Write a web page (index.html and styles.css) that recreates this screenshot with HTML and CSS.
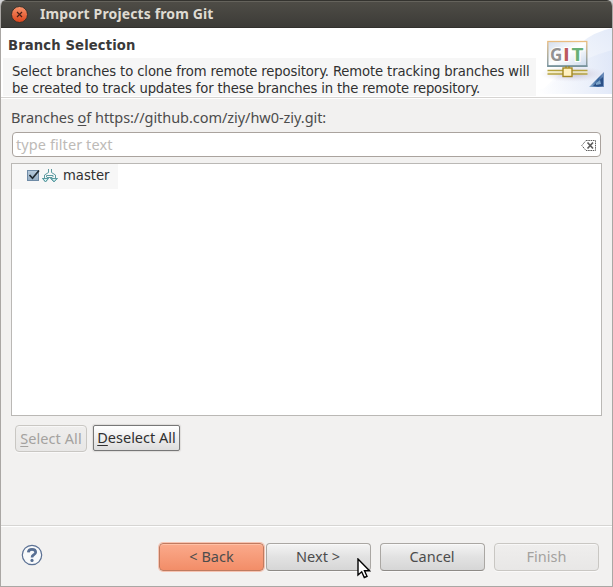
FILE: index.html
```html
<!DOCTYPE html>
<html lang="en">
<head>
<meta charset="utf-8">
<title>Import Projects from Git</title>
<link rel="stylesheet" href="styles.css">
</head>
<body>
<div class="window">
  <header class="titlebar">
    <svg class="close" width="18" height="18" viewBox="0 0 18 18">
      <defs><linearGradient id="cl" x1="0" y1="0" x2="0" y2="1"><stop offset="0" stop-color="#f8946c"/><stop offset="1" stop-color="#dc431a"/></linearGradient></defs>
      <circle cx="9.500" cy="9.500" r="8" fill="url(#cl)" stroke="#35322c"/>
      <path d="M7 7l5 5m0-5l-5 5" stroke="#492016" stroke-width="1.2"/>
    </svg>
    <span class="title">Import Projects from Git</span>
  </header>
  <section class="banner">
    <div class="intro">
      <h1>Branch Selection</h1>
      <p><span class="l1">Select branches to clone from remote repository. Remote tracking branches will</span><br><span class="l2">be created to track updates for these branches in the remote repository.</span></p>
    </div>
    <svg class="art" width="75" height="66" viewBox="0 0 75 66">
      <defs>
        <linearGradient id="sky" x1="0" y1="1" x2="1" y2="0"><stop offset="0" stop-color="#fff"/><stop offset=".5" stop-color="#f3f6fc"/><stop offset="1" stop-color="#e4ebf9"/></linearGradient>
        <linearGradient id="sky2" x1="0" y1="0" x2="1" y2="0"><stop offset="0" stop-color="#fff"/><stop offset="1" stop-color="#dbe4f7"/></linearGradient>
        <linearGradient id="screen" x1="0" y1="0" x2="1" y2="1"><stop offset="0" stop-color="#d3deee"/><stop offset=".5" stop-color="#fff"/><stop offset="1" stop-color="#cbd9ec"/></linearGradient>
        <linearGradient id="edge" x1="0" y1="0" x2="0" y2="1"><stop offset="0" stop-color="#e9bd80"/><stop offset="1" stop-color="#718c98"/></linearGradient>
        <linearGradient id="tri" x1="0" y1="0" x2="1" y2="0"><stop offset="0" stop-color="#9ab9d7"/><stop offset=".6" stop-color="#35639c"/><stop offset="1" stop-color="#7391bd"/></linearGradient>
        <radialGradient id="shade"><stop offset="0" stop-color="#bab2c4" stop-opacity=".8"/><stop offset="1" stop-color="#d8d4e2" stop-opacity="0"/></radialGradient>
      </defs>
      <path d="M75 0V66H0V62Q16 60 23 45Q38 8 75 0z" fill="url(#sky)"/>
      <path d="M75 22V66H2Q28 35 75 22z" fill="url(#sky2)" opacity=".7"/>
      <ellipse cx="36" cy="46" rx="33" ry="8" fill="url(#shade)"/>
      <rect x="10.800" y="13.500" width="39" height="24.500" fill="url(#screen)" stroke="url(#edge)" stroke-width="1.300"/>
      <path d="M10.200 38.300h40.300" stroke="#78939c" stroke-width="1.500"/>
      <g font-family="Noto Sans, sans-serif" font-weight="700" font-size="17" stroke="#fff" stroke-width="2" paint-order="stroke">
        <text x="13" y="32.500" fill="#929292">G</text><text x="26.300" y="32.500" font-family="DejaVu Sans, sans-serif" fill="#bc5a5e">I</text><text x="34.500" y="32.500" textLength="12" lengthAdjust="spacingAndGlyphs" fill="#68b077">T</text>
      </g>
      <path d="M10.500 42.500h40M10.500 46h40" stroke="#b6a23b" stroke-width="1.600"/>
      <path d="M10.500 44.200h40" stroke="#f8edac"/>
      <path d="M29 38v3M32 38v3" stroke="#9a872c" stroke-width="1.300"/>
      <rect x="26" y="40" width="9" height="8.500" fill="#fff1c0" stroke="#a58923" stroke-width="1.400"/>
      <path d="M67 44V59H52z" fill="url(#tri)"/><path d="M66 49V58H56z" fill="#2a4f86"/><path d="M59 55l4-3 1 4-5 1z" fill="#7ea5ca"/>
    </svg>
  </section>
  <main class="content">
    <div class="caption"><span>Branches <u>o</u>f https://github.com/ziy/hw0-ziy.git:</span></div>
    <div class="filter">
      <span>type filter text</span>
      <svg width="15" height="11" viewBox="0 0 15 11"><path d="M5 .5H14.500V10.500H5L.8 5.500z" fill="#fff" stroke="#5e5e5e" stroke-dasharray="1.600 .7"/><path d="M6.500 2.500l5.500 6m0-6l-5.500 6" stroke="#5c5c5c" stroke-width="1.700"/></svg>
    </div>
    <div class="tree">
      <div class="row">
        <svg class="check" width="14" height="13" viewBox="0 0 14 13"><defs><linearGradient id="cb" x1="0" y1="0" x2="0" y2="1"><stop offset="0" stop-color="#b7cbdc"/><stop offset="1" stop-color="#96aec4"/></linearGradient></defs><rect x=".5" y="1.500" width="11" height="10" fill="url(#cb)" stroke="#6f8ba6"/><path d="M2.500 6l3 3.300L12 1.500" fill="none" stroke="#202a32" stroke-width="1.700"/></svg>
        <svg class="branch" width="16" height="14" viewBox="0 0 16 14"><g fill="#d5f4f4" stroke="#5b9aa0"><path d="M6.500 0v3.500L2.500 6v3.500H.5L3.500 13 6.500 9.500H5V8.500H10V9.500H8.500L12 13 15.500 9.500H13.500V6L9.500 3.500V0" fill="none"/><path d="M.7 9.500h5.600L3.500 12.700zM9.300 9.500h5.600L12.100 12.700z"/><path d="M4.500 8V6.500h6.500V8" fill="none"/></g></svg>
        <span>master</span>
      </div>
    </div>
    <div class="selectors">
      <div class="btn select disabled"><span><u>S</u>elect All</span></div>
      <div class="btn deselect"><span><u>D</u>eselect All</span></div>
    </div>
  </main>
  <footer class="footer">
    <svg class="help" width="22" height="22" viewBox="0 0 22 22"><circle cx="11" cy="11" r="9.700" fill="#f8f9fa" stroke="#5b7194" stroke-width="1.200"/><path d="M7.300 8.300Q7.500 5.300 11 5.300Q14.700 5.300 14.700 8.200Q14.700 9.800 12.500 11Q11 11.800 11 13.500" fill="none" stroke="#586f93" stroke-width="2.700"/><circle cx="11" cy="16.400" r="1.600" fill="#586f93"/></svg>
    <div class="btn back"><span>&lt; Back</span></div>
    <div class="btn next"><span>Next &gt;</span></div>
    <div class="btn cancel"><span>Cancel</span></div>
    <div class="btn finish disabled"><span>Finish</span></div>
  </footer>
  <svg class="cursor" width="14" height="21" viewBox="0 0 14 21"><path d="M1 1V17L4.700 13.800L7.300 19.500L10 18.300L7.500 12.700H12.500z" fill="#fff" stroke="#000" stroke-width="1.400"/></svg>
</div>
</body>
</html>
```
FILE: styles.css
```css
* { box-sizing: border-box; }
body { margin: 0; background: #d2d2d4; }
.window { position: relative; width: 613px; height: 587px; display: flex; flex-direction: column; overflow: hidden; background: #f2f1f0; border: 1px solid #aaa7a4; border-top: 0; border-radius: 6px 6px 0 0; font: 14.5px "Noto Sans", sans-serif; color: #4c4c4c; white-space: nowrap; }
.titlebar { height: 28px; flex: none; margin: 0 -1px; padding-left: 10px; display: flex; align-items: center; gap: 12px; background: linear-gradient(#4f4d47, #3c3b37); border-top: 1px solid #34332f; border-bottom: 1px solid #32312d; box-shadow: inset 0 1px #65635c; color: #dfdbd2; }
.title { font: 700 14px/24px "Noto Sans", sans-serif; letter-spacing: .13px; margin-top: -1px; }
.banner { display: flex; height: 69px; flex: none; background: #fff; }
.intro { flex: 1; }
h1 { margin: 0; padding: 8px 0 0 7px; height: 30px; font: 700 14.67px/18px "DejaVu Sans Condensed", "DejaVu Sans", sans-serif; letter-spacing: .12px; color: #3a3a3a; }
p { margin: 0 0 0 2px; width: 533px; height: 38px; background: #f6f6f6; padding: 4px 0 0 9px; font: 14.67px/17px "DejaVu Sans Condensed", "DejaVu Sans", sans-serif; color: #303030; }
.l1 { letter-spacing: -.11px; }
.l2 { letter-spacing: -.14px; }
.art { flex: none; }
.content { height: 428px; flex: none; border-top: 1px solid #d6d4d2; box-shadow: inset 0 1px #fff; padding: 9px 10px 0; }
.caption { height: 25px; line-height: 21px; letter-spacing: -.05px; }
u { text-underline-offset: 2px; text-decoration-thickness: 1px; }
.filter { width: 589px; height: 25px; margin-left: 1px; display: flex; justify-content: space-between; align-items: center; padding: 0 4px 0 3px; background: #fff; border: 1px solid #aaa39e; border-radius: 4px; color: #bdbab7; }
.filter span { margin-top: -2px; letter-spacing: .08px; }
.filter svg { margin-top: 1px; }
.tree { width: 591px; height: 253px; margin-top: 6px; background: #fff; border: 1px solid #bab8b5; }
.row { width: 106px; height: 25px; display: flex; align-items: center; background: #f7f7f7; padding-left: 15px; color: #303030; font: 14.67px "DejaVu Sans Condensed", "DejaVu Sans", sans-serif; }
.check { margin-top: -2px; }
.branch { margin: -1px 5px 0 1px; }
.row span { margin-top: -4px; }
.selectors { display: flex; gap: 6px; padding: 8px 0 0 4px; }
.btn { display: flex; align-items: center; justify-content: center; height: 28px; border: 1px solid #aaa7a3; border-bottom-color: #8e8b87; border-radius: 4px; background: linear-gradient(#f4f4f4, #e2e2e2 50%, #d6d6d6); box-shadow: inset 0 1px #fff8, 0 1px #fff9; }
.btn span { margin-top: -2px; }
.select { width: 72px; height: 27px; margin-top: 1px; letter-spacing: .07px; }
.deselect { width: 87px; height: 26px; margin-top: 1px; border-color: #777; border-radius: 2px; background: linear-gradient(#fff, #ddd); color: #303030; box-shadow: 0 0 1px 1px #dedcda; }
.deselect span { margin-top: -3px; }
.disabled { color: #a4a29f; background: linear-gradient(#efeeed, #e8e7e6); border-color: #c9c7c3; }
.footer { flex: 1; display: flex; align-items: flex-start; border-top: 1px solid #d6d5d3; box-shadow: inset 0 1px #fff; padding: 17px 13px 0 20px; }
.help { flex: none; margin-top: 1px; margin-right: 116px; }
.back { width: 105px; border-color: #c07b60; background: linear-gradient(#fbaa8b, #f28d68); box-shadow: inset 0 1px #ffc0a5, 0 0 0 1px #f7c4b2; }
.next { width: 105px; margin-left: 2px; }
.next span { margin-left: -1px; }
.cancel { width: 105px; margin-left: 9px; }
.cancel span { margin-left: -1px; }
.finish { width: 105px; margin-left: 9px; }
.cursor { position: absolute; left: 356px; top: 558px; }
```
